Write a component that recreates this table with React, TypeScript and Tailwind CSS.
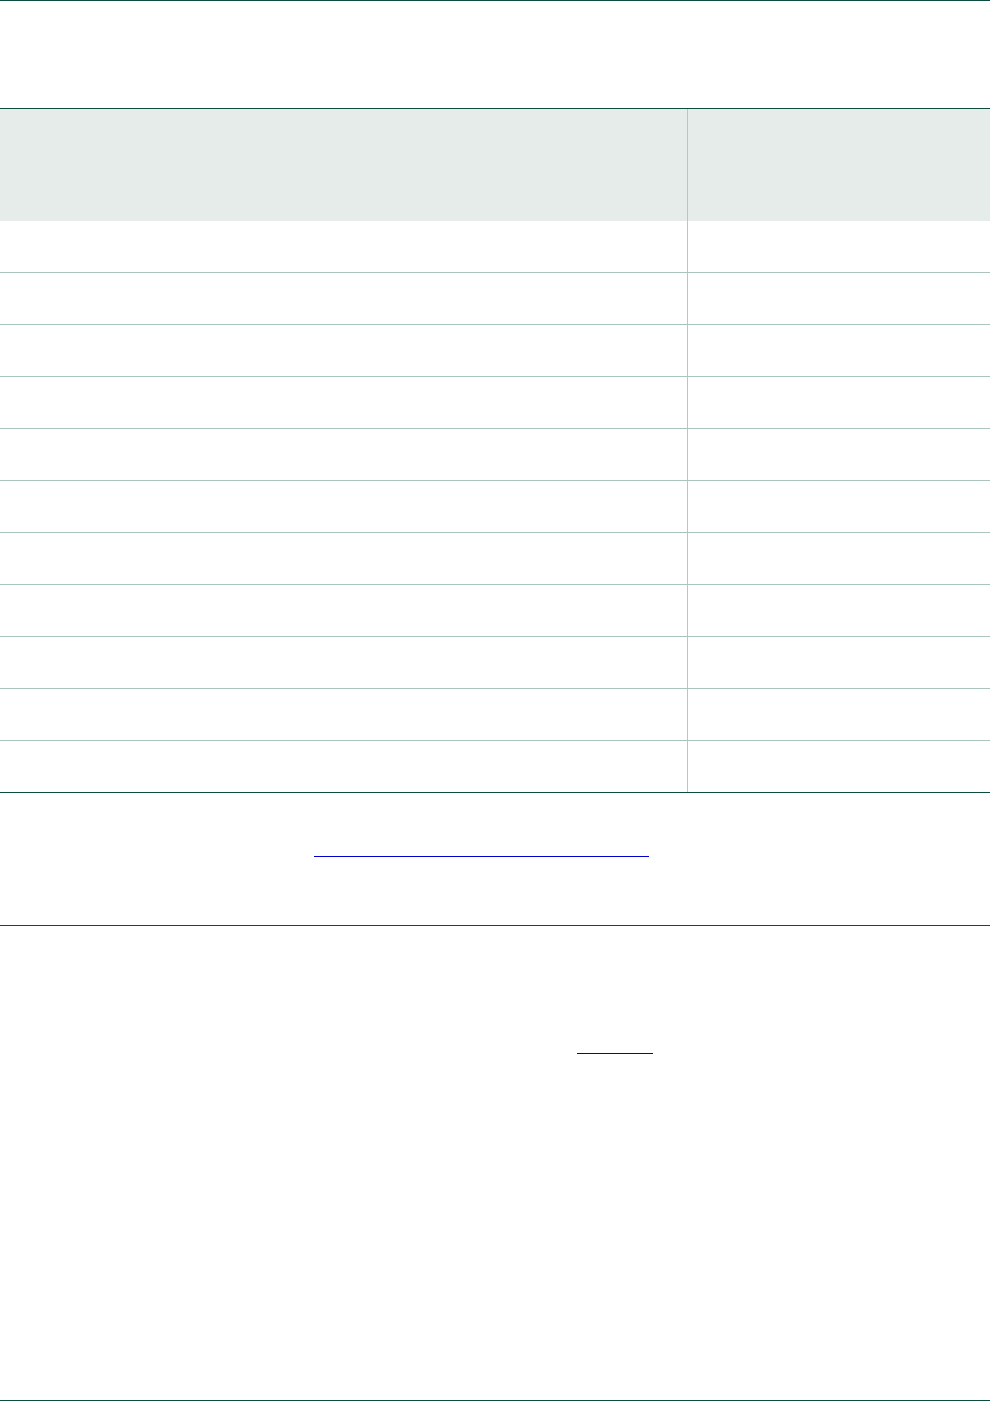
export default function App() {
  const rows = Array.from({ length: 11 }, (_, i) => i)

  return (
    <div className="w-[990px] h-[1401px] bg-white border-t border-b border-[#0c4b3f] font-['Liberation_Sans',Arial,sans-serif]">
      {/* 표 */}
      <div className="mt-[107px] border-t border-b border-[#0c4b3f]">
        <div className="grid grid-cols-[688px_1fr] h-[112px] bg-[#e5ecea]">
          <div className="border-r border-[#b9c7c4]" />
          <div />
        </div>
        {rows.map((i) => (
          <div
            key={i}
            className={
              i < rows.length - 1
                ? 'grid grid-cols-[688px_1fr] h-[52px] border-b border-[#abc5bc]'
                : 'grid grid-cols-[688px_1fr] h-[51px]'
            }
          >
            <div className="border-r border-[#b9c7c4]" />
            <div />
          </div>
        ))}
      </div>

      {/* 링크 */}
      <div className="h-[133px] border-b border-[#0c4b3f] pt-[63px]">
        <div className="ml-[314px] w-[335px] h-px bg-[#0000cc]" />
      </div>

      <div className="pt-[127px]">
        <div className="ml-[577px] w-[76px] h-px bg-[#0000cc]" />
      </div>
    </div>
  )
}
